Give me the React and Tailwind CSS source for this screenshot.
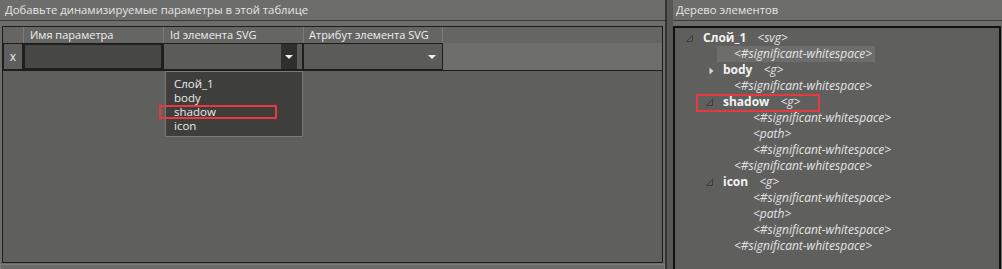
import React from 'react'

const FONT = { fontFamily: '"Open Sans", "Noto Sans", sans-serif' }

const OPTIONS = ['Слой_1', 'body', 'shadow', 'icon']

// tree rows: kind = open | closed | leaf1 | leaf2
const TREE = [
  { kind: 'open0', label: 'Слой_1', tag: '<svg>' },
  { kind: 'leaf1', label: '<#significant-whitespace>', selected: true },
  { kind: 'closed1', label: 'body', tag: '<g>' },
  { kind: 'leaf1', label: '<#significant-whitespace>' },
  { kind: 'open1', label: 'shadow', tag: '<g>', marked: true },
  { kind: 'leaf2', label: '<#significant-whitespace>' },
  { kind: 'leaf2', label: '<path>' },
  { kind: 'leaf2', label: '<#significant-whitespace>' },
  { kind: 'leaf1', label: '<#significant-whitespace>' },
  { kind: 'open1', label: 'icon', tag: '<g>' },
  { kind: 'leaf2', label: '<#significant-whitespace>' },
  { kind: 'leaf2', label: '<path>' },
  { kind: 'leaf2', label: '<#significant-whitespace>' },
  { kind: 'leaf1', label: '<#significant-whitespace>' },
]

function OpenArrow() {
  return (
    <svg width="7" height="7" viewBox="0 0 7 7" className="block">
      <path d="M6.5 0.5 L6.5 6.5 L0.5 6.5 Z" fill="none" stroke="#3c3c3b" strokeWidth="1" />
    </svg>
  )
}

function ClosedArrow() {
  return (
    <svg width="5" height="8" viewBox="0 0 5 8" className="block">
      <path d="M0.5 0.5 L4.5 4 L0.5 7.5 Z" fill="#d8d8d8" />
    </svg>
  )
}

function DownArrow() {
  return (
    <svg width="8" height="4" viewBox="0 0 8 4" className="block">
      <path d="M0 0 L8 0 L4 4 Z" fill="#f2f2f2" />
    </svg>
  )
}

function TreeRow({ row }) {
  if (row.kind.startsWith('leaf')) {
    const pad = row.kind === 'leaf1' ? 'pl-[42px]' : 'pl-[61px]'
    return (
      <div className={`flex h-[16px] items-center ${pad}`}>
        <span
          className={`h-[16px] pl-[17px] pr-[3px] italic leading-[16px] text-[#e4e4e4] ${
            row.selected ? 'bg-[#6d6d6b]' : ''
          }`}
        >
          {row.label}
        </span>
      </div>
    )
  }
  const pad = row.kind === 'open0' ? 'pl-[11px]' : 'pl-[31px]'
  return (
    <div className={`relative flex h-[16px] items-center ${pad}`}>
      <span className="flex w-[17px] items-center pt-[1px]">
        {row.kind.startsWith('open') ? <OpenArrow /> : <span className="ml-[3px]"><ClosedArrow /></span>}
      </span>
      <span className="font-bold leading-[16px] text-[#f2f2f2]">{row.label}</span>
      <span className="ml-[11px] italic leading-[16px] text-[#e4e4e4]">{row.tag}</span>
      {row.marked && (
        <span className="absolute left-[21px] top-0 h-[18px] w-[124px] border-2 border-[#e8393e]" />
      )}
    </div>
  )
}

export default function App() {
  return (
    <div className="flex h-[269px] w-[1002px] overflow-hidden bg-[#6d6d6b] text-[12px]" style={FONT}>
      {/* left panel */}
      <div className="flex w-[665px] flex-col">
        <div className="h-[20px] pl-[5px] text-[11.3px] leading-[20px] text-[#e6e6e6]">
          Добавьте динамизируемые параметры в этой таблице
        </div>
        <div className="h-px bg-[#3b3b3a]" />
        <div className="relative ml-[2px] mt-[5px] h-[237px] w-[661px] border border-[#1e1e1d] bg-[#5f5f5e]">
          {/* header row */}
          <div className="flex h-[16px] bg-[#656563] text-[11px] leading-[16px] text-[#f0f0f0]">
            <div className="w-[20px]" />
            <div className="w-[140px] border-l border-[#7b7b79] pl-[6px]">Имя параметра</div>
            <div className="w-[140px] border-l border-[#7b7b79] pl-[6px]">Id элемента SVG</div>
            <div className="w-[140px] border-x border-[#7b7b79] pl-[5px]">Атрибут элемента SVG</div>
            <div className="flex-1" />
          </div>
          {/* data row */}
          <div className="flex h-[28px] border-b border-[#1e1e1d] bg-[#6e6e6c]">
            <div className="flex w-[20px] items-center justify-center border border-[#1e1e1d] bg-[#5e5e5c] text-[#ededed]">
              x
            </div>
            <div className="w-[140px] border-2 border-[#1e1e1d] bg-[#474745]" />
            <div className="flex w-[140px] justify-end border border-[#1e1e1d] bg-[#5b5b59]">
              <div className="mr-[5px] flex w-[16px] items-center justify-center bg-[#2f2f2e]">
                <DownArrow />
              </div>
            </div>
            <div className="flex w-[140px] items-center justify-end border border-[#1e1e1d] bg-[#5b5b59] pr-[6px]">
              <DownArrow />
            </div>
            <div className="flex-1" />
          </div>
          {/* open dropdown */}
          <div className="absolute left-[162px] top-[44px] flex h-[66px] w-[138px] flex-col border border-[#7a7a78] bg-[#3e3e3c] pl-[8px] pt-[5px] text-[11.5px] leading-[14px] text-[#ececec]">
            {OPTIONS.map((o) => (
              <div key={o}>{o}</div>
            ))}
          </div>
          <div className="absolute left-[156px] top-[78px] h-[14px] w-[118px] border-2 border-[#e8393e]" />
        </div>
        <div className="mt-px flex-1 border-x border-t border-[#7d7d7b] bg-[#6b6b69]" />
      </div>

      {/* splitter */}
      <div className="flex w-[8px]">
        <div className="w-[2px] bg-[#333332]" />
        <div className="flex-1 bg-[#575756]" />
      </div>

      {/* right panel */}
      <div className="flex flex-1 flex-col">
        <div className="h-[20px] pl-[3px] text-[11.3px] leading-[20px] text-[#e6e6e6]">Дерево элементов</div>
        <div className="h-px bg-[#3b3b3a]" />
        <div className="mr-[1px] mt-[5px] flex-1 border-l-2 border-r-2 border-t-2 border-[#111110] bg-[#5f5f5e] pt-[2px]">
          {TREE.map((row, i) => (
            <TreeRow key={i} row={row} />
          ))}
        </div>
      </div>
    </div>
  )
}
